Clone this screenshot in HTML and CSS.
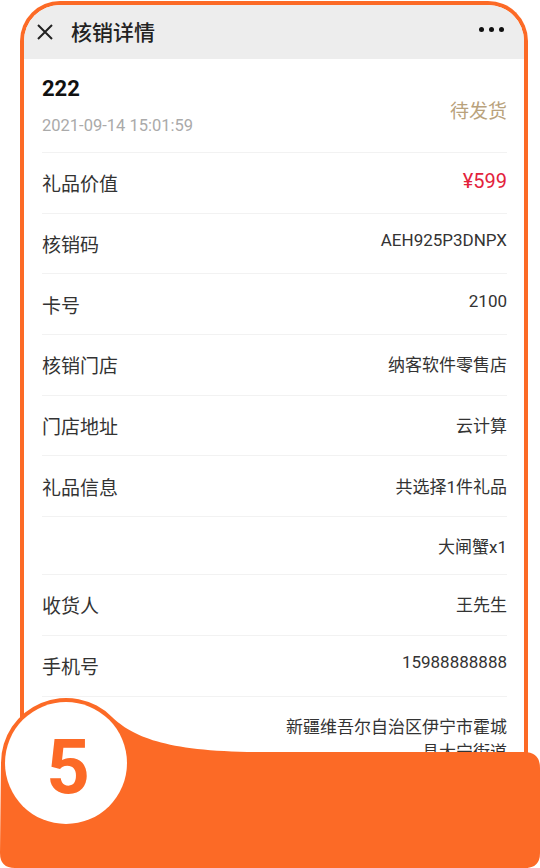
FILE: index.html
```html
<!DOCTYPE html>
<html lang="zh-CN">
<head>
    <meta charset="UTF-8">
    <title>核销详情</title>
    <link rel="stylesheet" href="styles.css">
</head>
<body>

    <div class="frame">
        <div class="nav">
            <svg class="nav-close" width="18" height="18" viewBox="0 0 18 18">
                <path d="M2 2 L16 16 M16 2 L2 16" stroke="#222" stroke-width="2" fill="none"/>
            </svg>
            <span class="nav-title">核销详情</span>
            <span class="nav-more"><i></i><i></i><i></i></span>
        </div>

        <div class="detail">
            <div class="head">
                <div>
                    <div class="order-no">222</div>
                    <div class="order-time">2021-09-14 15:01:59</div>
                </div>
                <div class="status">待发货</div>
            </div>

            <div class="row">
                <span class="label">礼品价值</span>
                <span class="value price">¥599</span>
            </div>
            <div class="row">
                <span class="label">核销码</span>
                <span class="value">AEH925P3DNPX</span>
            </div>
            <div class="row">
                <span class="label">卡号</span>
                <span class="value">2100</span>
            </div>
            <div class="row">
                <span class="label">核销门店</span>
                <span class="value">纳客软件零售店</span>
            </div>
            <div class="row">
                <span class="label">门店地址</span>
                <span class="value">云计算</span>
            </div>
            <div class="row">
                <span class="label">礼品信息</span>
                <span class="value">共选择1件礼品</span>
            </div>
            <div class="row row-sub">
                <span class="value">大闸蟹x1</span>
            </div>
            <div class="row">
                <span class="label">收货人</span>
                <span class="value">王先生</span>
            </div>
            <div class="row">
                <span class="label">手机号</span>
                <span class="value">15988888888</span>
            </div>
            <div class="row row-address">
                <span class="value address">新疆维吾尔自治区伊宁市霍城县大宁街道</span>
            </div>
        </div>
    </div>

    <!-- 步骤角标 -->
    <svg class="step" width="540" height="178" viewBox="0 0 540 178">
        <path d="M1 73 A65 65 0 0 1 112 27 C132 46 165 62 260 62 L524 62 Q540 62 540 78 L540 163 Q540 178 525 178 L15 178 Q0 178 0 163 Z" fill="#fc6a26"/>
        <circle cx="66" cy="73" r="61" fill="#fff"/>
        <text x="68" y="103" text-anchor="middle" class="step-num">5</text>
    </svg>

</body>
</html>
```

FILE: styles.css
```css
*{
    padding: 0;
    margin: 0;
    box-sizing: border-box;
}
body{
    width: 540px;
    height: 868px;
    overflow: hidden;
    position: relative;
    background: #fff;
    font-family: Roboto, "Noto Sans CJK SC", sans-serif;
    color: #333;
}
.frame{
    width: 508px;
    height: 900px;
    margin: 1px 0 0 20px;
    border: 4px solid #fc6a26;
    border-bottom: none;
    border-radius: 40px 40px 0 0;
    overflow: hidden;
}

/* 顶部导航 */
.nav{
    height: 54px;
    background: #ededed;
    display: flex;
    align-items: center;
    padding: 0 20px 0 12px;
}
.nav-close{
    display: block;
}
.nav-title{
    margin: 0 0 3px 17px;
    font-size: 21px;
    font-weight: 500;
    color: #222;
    flex: 1;
}
.nav-more{
    display: flex;
    gap: 5px;
    margin-top: -6px;
}
.nav-more i{
    width: 5px;
    height: 5px;
    border-radius: 50%;
    background: #111;
}

/* 详情 */
.detail{
    padding: 0 17px 0 18px;
}
.head{
    display: flex;
    justify-content: space-between;
    align-items: flex-start;
    padding: 17px 0 17px;
    border-bottom: 1px solid #f2f2f2;
}
.order-no{
    font-size: 22px;
    font-weight: 700;
    color: #111;
}
.order-time{
    margin-top: 15px;
    font-size: 16.5px;
    color: #aaa;
}
.status{
    margin-top: 20px;
    font-size: 19px;
    color: #b9a27c;
}

.row{
    display: flex;
    justify-content: space-between;
    align-items: flex-start;
    padding: 16.35px 0;
    border-bottom: 1px solid #f2f2f2;
}
.row-sub{
    justify-content: flex-end;
    padding: 16px 0;
}
.row-address{
    justify-content: flex-end;
}
.label{
    font-size: 19px;
    color: #333;
}
.value{
    font-size: 17px;
    color: #333;
    text-align: right;
}
.price{
    font-size: 20px;
    color: #e3223c;
}
.address{
    max-width: 222px;
}

/* 步骤角标 */
.step{
    position: absolute;
    left: 0;
    top: 690px;
    display: block;
}
.step-num{
    font-family: Roboto, sans-serif;
    font-size: 76px;
    font-weight: 700;
    fill: #fc6a26;
}
```
